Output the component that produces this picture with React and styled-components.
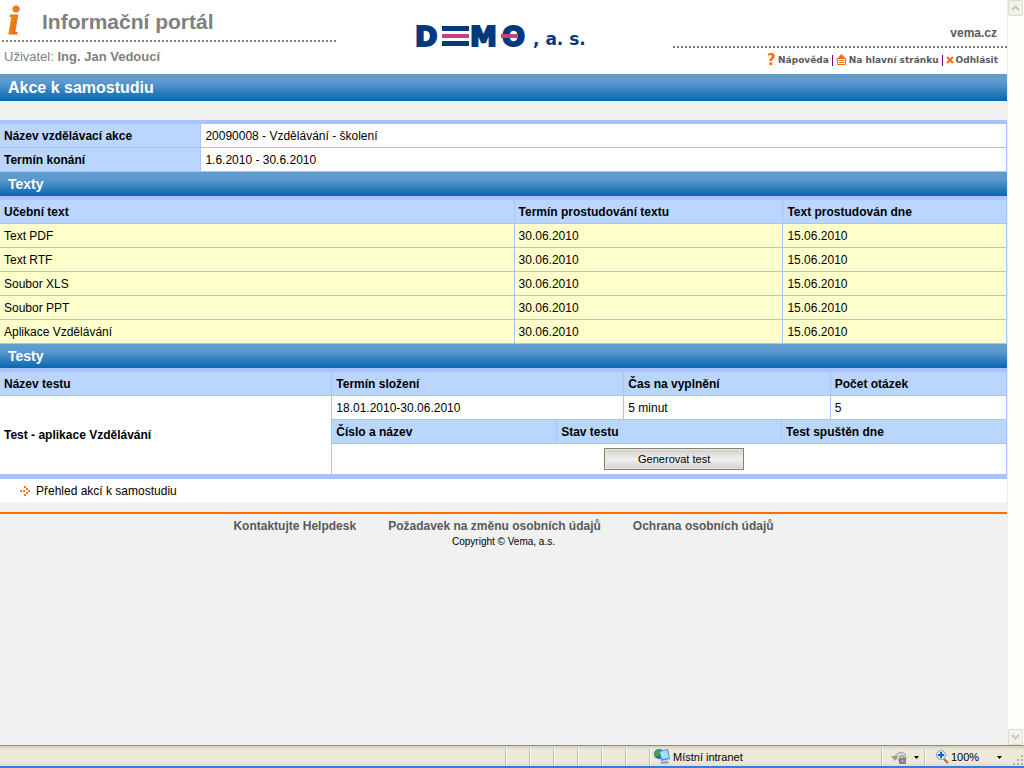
import React from 'react';
import styled, { createGlobalStyle, css } from 'styled-components';

const textRows = [
  { name: 'Text PDF', term: '30.06.2010', done: '15.06.2010' },
  { name: 'Text RTF', term: '30.06.2010', done: '15.06.2010' },
  { name: 'Soubor XLS', term: '30.06.2010', done: '15.06.2010' },
  { name: 'Soubor PPT', term: '30.06.2010', done: '15.06.2010' },
  { name: 'Aplikace Vzdělávání', term: '30.06.2010', done: '15.06.2010' },
];

const footerLinks = [
  'Kontaktujte Helpdesk',
  'Požadavek na změnu osobních údajů',
  'Ochrana osobních údajů',
];

const InfoIcon = () => (
  <svg width="18" height="34" viewBox="0 0 18 34" aria-hidden="true">
    <defs>
      <linearGradient id="infoFill" x1="0" y1="0" x2="1" y2="1">
        <stop offset="0" stopColor="#ffa030" />
        <stop offset="0.5" stopColor="#f47a10" />
        <stop offset="1" stopColor="#b84a00" />
      </linearGradient>
    </defs>
    <text
      x="2"
      y="29"
      fontFamily="Liberation Serif, serif"
      fontSize="41"
      fontWeight="bold"
      fontStyle="italic"
      fill="url(#infoFill)"
      stroke="#e8751a"
      strokeWidth="1"
    >
      i
    </text>
  </svg>
);

const DemoLogo = () => (
  <svg width="174" height="26" viewBox="0 0 174 26" role="img" aria-label="DEMO, a. s.">
    <g
      fontFamily="DejaVu Sans, sans-serif"
      fontWeight="bold"
      fill="#003a7d"
      stroke="#003a7d"
    >
      <text x="-1" y="21" fontSize="27" strokeWidth="2">D</text>
      <text x="54" y="21" fontSize="27" strokeWidth="2">M</text>
      <text x="86" y="21" fontSize="27" strokeWidth="2">O</text>
      <text x="117" y="20" fontSize="17" strokeWidth="0">, a. s.</text>
    </g>
    <rect x="26" y="1" width="27" height="5" fill="#003a7d" />
    <rect x="26" y="16" width="27" height="5" fill="#003a7d" />
    <rect x="26" y="9" width="27" height="4" fill="#c8407c" />
    <rect x="85" y="9" width="16" height="4" fill="#c8407c" />
  </svg>
);

const HelpIcon = () => (
  <svg width="8" height="12" viewBox="0 0 8 12" aria-hidden="true">
    <text x="-1" y="11" fontFamily="DejaVu Sans, sans-serif" fontSize="15" fontWeight="bold" fill="#ff6c00">?</text>
  </svg>
);

const HomeIcon = () => (
  <svg width="11" height="12" viewBox="0 0 11 12" aria-hidden="true">
    <path d="M5.5 0 L11 6 H0 Z" fill="#ff6c00" />
    <path d="M1.5 5 V10.5 H9.5 V5" fill="#fff" stroke="#ff6c00" />
    <rect x="3" y="6" width="5" height="1" fill="#ff6c00" />
    <rect x="3" y="8" width="5" height="1" fill="#ff6c00" />
  </svg>
);

const CloseIcon = () => (
  <svg width="8" height="10" viewBox="0 0 8 10" aria-hidden="true">
    <path d="M1 2 L7 8 M7 2 L1 8" stroke="#ff6c00" strokeWidth="2" />
  </svg>
);

const ArrowIcon = () => (
  <svg width="10" height="10" viewBox="0 0 10 10" fill="#f07818" shapeRendering="crispEdges" aria-hidden="true">
    <rect x="0" y="4" width="2" height="2" />
    <rect x="3" y="4" width="2" height="2" />
    <rect x="4" y="0" width="2" height="2" />
    <rect x="6" y="2" width="2" height="2" />
    <rect x="8" y="4" width="2" height="2" />
    <rect x="6" y="6" width="2" height="2" />
    <rect x="4" y="8" width="2" height="2" />
  </svg>
);

const IntranetIcon = () => (
  <svg width="16" height="16" viewBox="0 0 16 16" aria-hidden="true">
    <circle cx="5" cy="5" r="5" fill="#2a62c4" />
    <path d="M1 3 Q4 -1 7 1 L6 5 L3 8 L0 6 Z" fill="#3fa83c" />
    <path d="M5 2 L14 0 L16 10 L7 12 Z" fill="#5b86d0" />
    <path d="M6 3 L13 1 L15 9 L8 10 Z" fill="#9be2ff" />
    <path d="M8 12 L13 11 L15 13 L12 16 L7 15 L6 13 Z" fill="#c9cbdd" />
    <path d="M7 14 L13 13 L15 14" stroke="#7377a0" fill="none" />
  </svg>
);

const PrivacyIcon = () => (
  <svg width="17" height="16" viewBox="0 0 17 16" aria-hidden="true">
    <path d="M4 8 A6 6 0 0 1 14 5 L15 10 L8 12 Z" fill="#d4d4d0" stroke="#a2a2a0" />
    <path d="M0 7 H7 L4 12 Z" fill="#9a9a98" />
    <path d="M9 10 V8 Q11 5 13 8 V10" stroke="#808080" fill="none" />
    <rect x="8" y="9" width="7" height="6" fill="#858585" />
    <rect x="11" y="11" width="1" height="2" fill="#ddd" />
  </svg>
);

const ZoomIcon = () => (
  <svg width="13" height="14" viewBox="0 0 13 14" aria-hidden="true">
    <path d="M8 9 L12 13" stroke="#b3663c" strokeWidth="2" />
    <circle cx="5" cy="5" r="4.5" fill="#d8ecff" stroke="#7a9cc4" />
    <path d="M5 2 V8 M2 5 H8" stroke="#1260cc" strokeWidth="2" />
  </svg>
);

const Caret = () => (
  <svg width="5" height="3" viewBox="0 0 5 3" aria-hidden="true">
    <path d="M0 0 H5 L2.5 3 Z" fill="#000" />
  </svg>
);

const Chevron = ({ down }) => (
  <svg width="9" height="6" viewBox="0 0 9 6" aria-hidden="true">
    <path d={down ? 'M1 1 L4.5 4.5 L8 1' : 'M1 5 L4.5 1.5 L8 5'} fill="none" stroke="#c9c8bf" strokeWidth="2" />
  </svg>
);

const Grip = () => (
  <GripSvg width="11" height="11" viewBox="0 0 11 11" fill="#b8b4a2" shapeRendering="crispEdges" aria-hidden="true">
    <rect x="8" y="0" width="2" height="2" />
    <rect x="4" y="4" width="2" height="2" />
    <rect x="8" y="4" width="2" height="2" />
    <rect x="0" y="8" width="2" height="2" />
    <rect x="4" y="8" width="2" height="2" />
    <rect x="8" y="8" width="2" height="2" />
  </GripSvg>
);

const App = () => (
  <Window>
    <GlobalStyle />
    <Viewport>
      <Page>
        <Header>
          <HeaderLeft>
            <Brand>
              <InfoIcon />
              <PortalTitle>Informační portál</PortalTitle>
            </Brand>
            <Dots />
            <User>
              Uživatel: <b>Ing. Jan Vedoucí</b>
            </User>
          </HeaderLeft>
          <LogoArea>
            <DemoLogo />
          </LogoArea>
          <HeaderRight>
            <Site href="#vema">vema.cz</Site>
            <Dots />
            <TopNav>
              <TopLink href="#help"><HelpIcon />Nápověda</TopLink>
              <Divider />
              <TopLink href="#home"><HomeIcon />Na hlavní stránku</TopLink>
              <Divider />
              <TopLink href="#logout"><CloseIcon />Odhlásit</TopLink>
            </TopNav>
          </HeaderRight>
        </Header>

        <PageTitle>Akce k samostudiu</PageTitle>

        <Main>
          <Table>
            <colgroup>
              <Col $width="20%" />
              <Col />
            </colgroup>
            <tbody>
              <tr>
                <HeadCell scope="row">Název vzdělávací akce</HeadCell>
                <Cell>20090008 - Vzdělávání - školení</Cell>
              </tr>
              <tr>
                <HeadCell scope="row">Termín konání</HeadCell>
                <Cell>1.6.2010 - 30.6.2010</Cell>
              </tr>
            </tbody>
          </Table>

          <SectionTitle>Texty</SectionTitle>
          <Table>
            <colgroup>
              <Col $width="51.1%" />
              <Col $width="26.7%" />
              <Col />
            </colgroup>
            <thead>
              <tr>
                <HeadCell>Učební text</HeadCell>
                <HeadCell>Termín prostudování textu</HeadCell>
                <HeadCell>Text prostudován dne</HeadCell>
              </tr>
            </thead>
            <tbody>
              {textRows.map((row) => (
                <tr key={row.name}>
                  <Cell $done><CellLink href="#text">{row.name}</CellLink></Cell>
                  <Cell $done>{row.term}</Cell>
                  <Cell $done>{row.done}</Cell>
                </tr>
              ))}
            </tbody>
          </Table>

          <SectionTitle>Testy</SectionTitle>
          <Table>
            <colgroup>
              <Col $width="33%" />
              <Col $width="29%" />
              <Col $width="20.5%" />
              <Col />
            </colgroup>
            <thead>
              <tr>
                <HeadCell>Název testu</HeadCell>
                <HeadCell>Termín složení</HeadCell>
                <HeadCell>Čas na vyplnění</HeadCell>
                <HeadCell>Počet otázek</HeadCell>
              </tr>
            </thead>
            <tbody>
              <tr>
                <Cell rowSpan={2}><b>Test - aplikace Vzdělávání</b></Cell>
                <Cell>18.01.2010-30.06.2010</Cell>
                <Cell>5 minut</Cell>
                <Cell>5</Cell>
              </tr>
              <tr>
                <NestedCell colSpan={3}>
                  <NestedTable>
                    <thead>
                      <tr>
                        <HeadCell>Číslo a název</HeadCell>
                        <HeadCell>Stav testu</HeadCell>
                        <HeadCell>Test spuštěn dne</HeadCell>
                      </tr>
                    </thead>
                    <tbody>
                      <tr>
                        <ActionCell colSpan={3}>
                          <Button type="button">Generovat test</Button>
                        </ActionCell>
                      </tr>
                    </tbody>
                  </NestedTable>
                </NestedCell>
              </tr>
            </tbody>
          </Table>

          <BackRow>
            <ArrowIcon />
            <CellLink href="#list">Přehled akcí k samostudiu</CellLink>
          </BackRow>
        </Main>

        <Footer>
          <FooterLinks>
            {footerLinks.map((text) => (
              <FooterLink href="#footer" key={text}>{text}</FooterLink>
            ))}
          </FooterLinks>
          <Copyright>Copyright © Vema, a.s.</Copyright>
        </Footer>
      </Page>

      <ScrollBar>
        <ScrollButton type="button" aria-label="Nahoru"><Chevron /></ScrollButton>
        <ScrollButton type="button" aria-label="Dolů"><Chevron down /></ScrollButton>
      </ScrollBar>
    </Viewport>

    <StatusBar>
      <StatusFill />
      <StatusPane />
      <StatusPane />
      <StatusPane />
      <StatusPane />
      <StatusPane />
      <StatusPane />
      <ZonePane><IntranetIcon />Místní intranet</ZonePane>
      <PrivacyPane><PrivacyIcon /><Caret /></PrivacyPane>
      <ZoomPane>
        <ZoomIcon />
        <ZoomValue>100%</ZoomValue>
        <Caret />
        <Grip />
      </ZoomPane>
    </StatusBar>
  </Window>
);

// Styled Components
const GlobalStyle = createGlobalStyle`
  * {
    box-sizing: border-box;
  }

  body {
    margin: 0;
    background: #f1f1f1;
    color: #000;
    font-family: "Liberation Sans", Arial, sans-serif;
    font-size: 12px;
    line-height: 16px;
  }

  a {
    color: inherit;
    text-decoration: none;
  }

  svg {
    display: block;
    flex: none;
    overflow: visible;
  }
`;

const Window = styled.div`
  display: flex;
  flex-direction: column;
  height: 100vh;
`;

const Viewport = styled.div`
  flex: 1;
  display: flex;
  min-height: 0;
`;

const Page = styled.div`
  flex: 1;
  min-width: 0;
  overflow: hidden;
  background: #f1f1f1;
`;

const Header = styled.header`
  display: grid;
  grid-template-columns: repeat(3, 1fr);
  height: 74px;
  background: #fff;
`;

const HeaderLeft = styled.div`
  color: #808080;
`;

const Brand = styled.div`
  display: flex;
  align-items: center;
  gap: 18px;
  height: 40px;
  padding: 4px 0 0 6px;
`;

const PortalTitle = styled.h1`
  margin: 0;
  font-size: 21px;
  line-height: 36px;
`;

const Dots = styled.div`
  height: 2px;
  margin-left: 2px;
  background: repeating-linear-gradient(90deg, #808080 0 2px, transparent 2px 4px);
`;

const User = styled.div`
  padding: 6px 4px;
  font-size: 13px;
  line-height: 18px;
`;

const LogoArea = styled.div`
  display: flex;
  justify-content: center;
  padding-top: 25px;
`;

const HeaderRight = styled.div`
  display: flex;
  flex-direction: column;
  color: #595959;
`;

const Site = styled.a`
  align-self: flex-end;
  height: 46px;
  padding: 25px 10px 0 0;
  font-weight: bold;
`;

const TopNav = styled.nav`
  display: flex;
  align-items: center;
  justify-content: flex-end;
  gap: 3px;
  height: 24px;
  padding-right: 9px;
`;

const TopLink = styled.a`
  display: flex;
  align-items: center;
  gap: 2px;
  font-family: "DejaVu Sans", Verdana, sans-serif;
  font-size: 9px;
  font-weight: bold;
`;

const Divider = styled.span`
  width: 1px;
  height: 11px;
  background: #800080;
`;

const barFill = css`
  margin: 0;
  padding-left: 8px;
  background: linear-gradient(#629dd1 0%, #5c99ce 30%, #0867b0 100%);
  color: #fff;
  font-weight: bold;
`;

const PageTitle = styled.h2`
  ${barFill}
  font-size: 16px;
  line-height: 27px;
`;

const SectionTitle = styled.h3`
  ${barFill}
  font-size: 14px;
  line-height: 24px;
`;

const Main = styled.main`
  margin-top: 19px;
`;

const Table = styled.table`
  width: 100%;
  table-layout: fixed;
  border-collapse: separate;
  border-spacing: 0;
  border-top: 4px solid #aac2ff;
`;

const Col = styled.col`
  width: ${(props) => props.$width || 'auto'};
`;

const cellBox = css`
  height: 24px;
  padding: 0 4px;
  border-right: 1px solid #aac2ff;
  border-bottom: 1px solid #aac2ff;
  text-align: left;
  vertical-align: middle;
`;

const HeadCell = styled.th`
  ${cellBox}
  background: #bad6ff;
`;

const Cell = styled.td`
  ${cellBox}
  background: ${(props) => (props.$done ? '#ffffcc' : '#fff')};
`;

const NestedCell = styled.td`
  padding: 0;
  border-bottom: 1px solid #aac2ff;
`;

const NestedTable = styled.table`
  width: 100%;
  table-layout: fixed;
  border-spacing: 0;
`;

const ActionCell = styled.td`
  height: 30px;
  padding: 0 0 0 10px;
  border-right: 1px solid #aac2ff;
  background: #fff;
  text-align: center;
`;

const Button = styled.button`
  display: block;
  width: 140px;
  height: 22px;
  margin: 0 auto;
  padding: 0;
  border: 1px solid #808078;
  box-shadow: inset 0 0 0 1px #ece9d8;
  background: linear-gradient(#cdcdcd, #f0f0f0 50%, #d2d2d2);
  color: #000;
  font-family: inherit;
  font-size: 11px;
`;

const CellLink = styled.a`
  color: #000;
`;

const BackRow = styled.div`
  display: flex;
  align-items: center;
  gap: 6px;
  height: 27px;
  padding-left: 20px;
  border-top: 4px solid #aac2ff;
  background: #fff;
`;

const Footer = styled.footer`
  margin-top: 10px;
  padding-top: 4px;
  border-top: 2px solid #ff6c00;
  text-align: center;
`;

const FooterLinks = styled.nav`
  display: flex;
  justify-content: center;
  gap: 32px;
`;

const FooterLink = styled.a`
  color: #595959;
  font-weight: bold;
`;

const Copyright = styled.div`
  font-size: 10px;
`;

const ScrollBar = styled.div`
  display: flex;
  flex-direction: column;
  justify-content: space-between;
  width: 17px;
  border-left: 1px solid #eeeee6;
  background: #fefefa;
`;

const ScrollButton = styled.button`
  display: flex;
  align-items: center;
  justify-content: center;
  width: 15px;
  height: 16px;
  padding: 0;
  border: 1px solid #dddccf;
  border-radius: 2px;
  background: #f2f1ea;
`;

const StatusBar = styled.footer`
  display: flex;
  height: 23px;
  padding-top: 2px;
  border-top: 1px solid #8e8d80;
  border-bottom: 2px solid #3c7ad8;
  background: linear-gradient(#d2cfbd, #ece9d8 4px, #ece9d8 16px, #e2dfc8);
  font-size: 11px;
`;

const StatusFill = styled.div`
  flex: 1;
`;

const StatusPane = styled.div`
  display: flex;
  align-items: center;
  width: 24px;
  border-left: 1px solid #c5c2b0;
  box-shadow: inset 1px 0 0 #fff;
`;

const ZonePane = styled(StatusPane)`
  gap: 3px;
  width: 232px;
  padding-left: 4px;
`;

const PrivacyPane = styled(StatusPane)`
  gap: 6px;
  width: 43px;
  padding-left: 9px;
`;

const ZoomPane = styled(StatusPane)`
  gap: 2px;
  width: 100px;
  padding-left: 11px;
`;

const ZoomValue = styled.span`
  flex: 1;
`;

const GripSvg = styled.svg`
  align-self: flex-end;
  margin-left: 9px;
`;

export default App;
